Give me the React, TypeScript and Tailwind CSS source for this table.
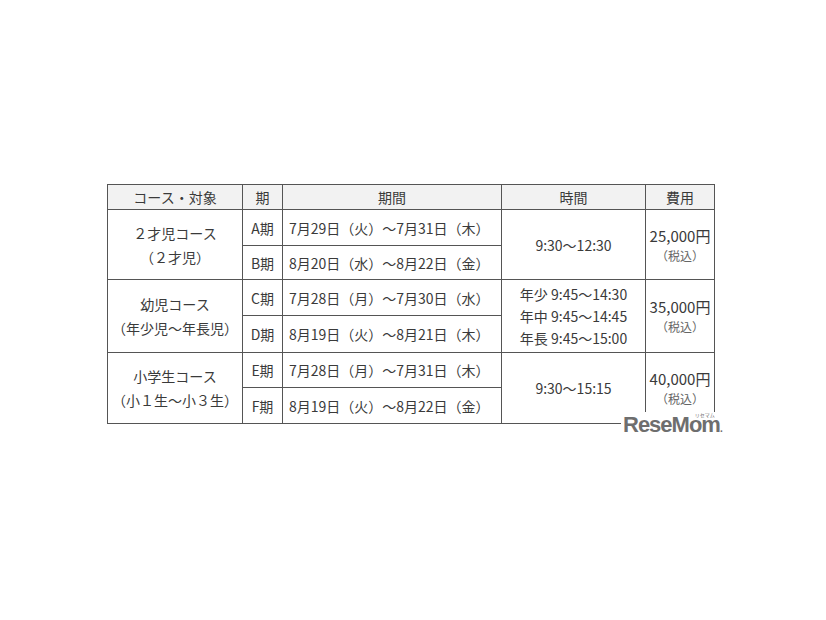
import React from 'react';

type Row = { term: string; period: string; h: string };

const groups: {
  course: string[];
  time: string[];
  fee: string;
  rows: Row[];
}[] = [
  {
    course: ['２才児コース', '（２才児）'],
    time: ['9:30〜12:30'],
    fee: '25,000円',
    rows: [
      { term: 'A期', period: '7月29日（火）〜7月31日（木）', h: 'h-[36px]' },
      { term: 'B期', period: '8月20日（水）〜8月22日（金）', h: 'h-[34px]' },
    ],
  },
  {
    course: ['幼児コース', '（年少児〜年長児）'],
    time: ['年少 9:45〜14:30', '年中 9:45〜14:45', '年長 9:45〜15:00'],
    fee: '35,000円',
    rows: [
      { term: 'C期', period: '7月28日（月）〜7月30日（水）', h: 'h-[36px]' },
      { term: 'D期', period: '8月19日（火）〜8月21日（木）', h: 'h-[37px]' },
    ],
  },
  {
    course: ['小学生コース', '（小１生〜小３生）'],
    time: ['9:30〜15:15'],
    fee: '40,000円',
    rows: [
      { term: 'E期', period: '7月28日（月）〜7月31日（木）', h: 'h-[35px]' },
      { term: 'F期', period: '8月19日（火）〜8月22日（金）', h: 'h-[36px]' },
    ],
  },
];

const cell = 'border border-[#555]';

export default function App() {
  return (
    <div
      className="relative h-[620px] w-[826px] bg-white pl-[107px] pt-[184px] text-[14px] text-[#3a3a3a]"
      style={{ fontFamily: '"Noto Sans CJK JP", "Noto Sans", sans-serif' }}
    >
      <table className="w-[607px] table-fixed border-collapse leading-none">
        <colgroup>
          <col className="w-[135px]" />
          <col className="w-[40px]" />
          <col className="w-[219px]" />
          <col className="w-[144px]" />
          <col className="w-[69px]" />
        </colgroup>
        <thead>
          <tr className="h-[25px] bg-[#f2f2f2]">
            <th className={`${cell} font-normal`}>コース・対象</th>
            <th className={`${cell} font-normal`}>期</th>
            <th className={`${cell} font-normal`}>期間</th>
            <th className={`${cell} font-normal`}>時間</th>
            <th className={`${cell} font-normal`}>費用</th>
          </tr>
        </thead>
        <tbody>
          {groups.map((g) =>
            g.rows.map((r, i) => (
              <tr key={r.term} className={r.h}>
                {i === 0 && (
                  <td rowSpan={2} className={`${cell} text-center`}>
                    <div className="flex flex-col gap-[10px]">
                      {g.course.map((c) => (
                        <span key={c}>{c}</span>
                      ))}
                    </div>
                  </td>
                )}
                <td className={`${cell} text-center`}>{r.term}</td>
                <td className={`${cell} pl-[6px] whitespace-nowrap`}>{r.period}</td>
                {i === 0 && (
                  <td rowSpan={2} className={`${cell} text-center`}>
                    <div className="flex flex-col gap-[8px]">
                      {g.time.map((t) => (
                        <span key={t}>{t}</span>
                      ))}
                    </div>
                  </td>
                )}
                {i === 0 && (
                  <td rowSpan={2} className={`${cell} text-center`}>
                    <div className="flex flex-col items-center gap-[7px]">
                      <span className="text-[15px]">{g.fee}</span>
                      <span className="text-[12px] text-[#666]">（税込）</span>
                    </div>
                  </td>
                )}
              </tr>
            )),
          )}
        </tbody>
      </table>

      <div className="absolute left-[621px] top-[412px] bg-white px-[2px]">
        <div
          className="relative text-[22px] font-bold leading-[25px] tracking-[-1px] text-[#6e6e6e]"
          style={{ fontFamily: '"Liberation Sans", Arial, sans-serif' }}
        >
          ReseMom<span className="text-[10px] tracking-normal">.</span>
          <span
            className="absolute right-[8px] top-[0px] text-[5px] font-normal leading-none tracking-normal"
            style={{ fontFamily: '"Noto Sans CJK JP", sans-serif' }}
          >
            リセマム
          </span>
        </div>
      </div>
    </div>
  );
}
